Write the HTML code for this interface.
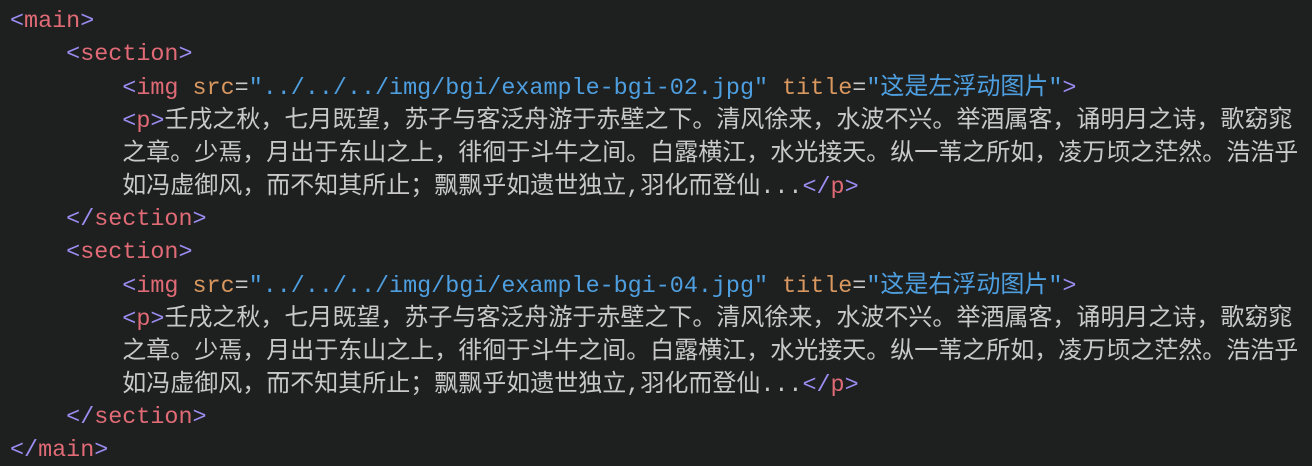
<!DOCTYPE html>
<html><head><meta charset="utf-8"><style>
html,body{margin:0;padding:0;background:#1e1f1f;width:1312px;height:466px;overflow:hidden}
.w{padding:6px 0 0 10px;font-family:"Liberation Mono",monospace;font-size:23.4px;color:#c9c9c9}
.w div{height:33px;line-height:33px;white-space:pre;overflow:visible}
.c{font-family:"Noto Sans CJK SC",sans-serif;font-size:24px;line-height:1;display:inline-block;vertical-align:baseline}
.b{color:#9a8cf0}.t{color:#e06b76}.a{color:#d9985f}.s{color:#4e9fe0}
</style></head><body><div class="w">
<div><span class="b">&lt;</span><span class="t">main</span><span class="b">&gt;</span></div>
<div>    <span class="b">&lt;</span><span class="t">section</span><span class="b">&gt;</span></div>
<div>        <span class="b">&lt;</span><span class="t">img</span> <span class="a">src</span>=<span class="s">"../../../img/bgi/example-bgi-02.jpg"</span> <span class="a">title</span>=<span class="s">"<span class="c">这是左浮动图片</span>"</span><span class="b">&gt;</span></div>
<div>        <span class="b">&lt;</span><span class="t">p</span><span class="b">&gt;</span><span class="c">壬戌之秋，七月既望，苏子与客泛舟游于赤壁之下。清风徐来，水波不兴。举酒属客，诵明月之诗，歌窈窕</span></div>
<div>        <span class="c">之章。少焉，月出于东山之上，徘徊于斗牛之间。白露横江，水光接天。纵一苇之所如，凌万顷之茫然。浩浩乎</span></div>
<div>        <span class="c">如冯虚御风，而不知其所止；飘飘乎如遗世独立</span>,<span class="c">羽化而登仙</span>...<span class="b">&lt;/</span><span class="t">p</span><span class="b">&gt;</span></div>
<div>    <span class="b">&lt;/</span><span class="t">section</span><span class="b">&gt;</span></div>
<div>    <span class="b">&lt;</span><span class="t">section</span><span class="b">&gt;</span></div>
<div>        <span class="b">&lt;</span><span class="t">img</span> <span class="a">src</span>=<span class="s">"../../../img/bgi/example-bgi-04.jpg"</span> <span class="a">title</span>=<span class="s">"<span class="c">这是右浮动图片</span>"</span><span class="b">&gt;</span></div>
<div>        <span class="b">&lt;</span><span class="t">p</span><span class="b">&gt;</span><span class="c">壬戌之秋，七月既望，苏子与客泛舟游于赤壁之下。清风徐来，水波不兴。举酒属客，诵明月之诗，歌窈窕</span></div>
<div>        <span class="c">之章。少焉，月出于东山之上，徘徊于斗牛之间。白露横江，水光接天。纵一苇之所如，凌万顷之茫然。浩浩乎</span></div>
<div>        <span class="c">如冯虚御风，而不知其所止；飘飘乎如遗世独立</span>,<span class="c">羽化而登仙</span>...<span class="b">&lt;/</span><span class="t">p</span><span class="b">&gt;</span></div>
<div>    <span class="b">&lt;/</span><span class="t">section</span><span class="b">&gt;</span></div>
<div><span class="b">&lt;/</span><span class="t">main</span><span class="b">&gt;</span></div>
</div></body></html>
